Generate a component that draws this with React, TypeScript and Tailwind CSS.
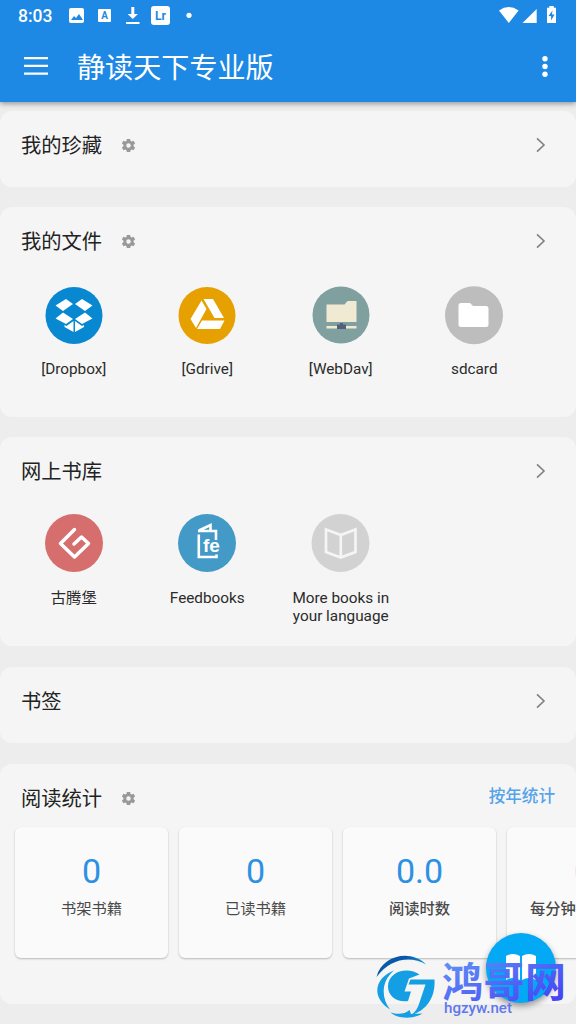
import type { ReactNode } from "react";

const FONT = "font-[Roboto,'Noto_Sans_CJK_SC',sans-serif]";

function Gear() {
  return (
    <svg className="size-[15px] fill-[#999]" viewBox="0 0 24 24">
      <path
        fillRule="evenodd"
        d="M9.300 1.500h5.400l.6 3.100 1.700 1 3.200-1.100 2.400 4.200-2.500 2.200v2.200l2.500 2.200-2.400 4.200-3.200-1.100-1.700 1-.6 3.100H9.300l-.6-3.100-1.700-1-3.200 1.100-2.400-4.200 2.500-2.200v-2.200L1.400 8.700l2.400-4.200L7 5.600l1.700-1zM12 8.400a3.600 3.600 0 1 0 0 7.200 3.600 3.600 0 0 0 0-7.200z"
      />
    </svg>
  );
}

function Chevron() {
  return (
    <svg className="h-4 w-[10px]" viewBox="0 0 10 16" fill="none" stroke="#808080" strokeWidth="1.6">
      <path d="M1 1.300 8 8l-7 6.700" />
    </svg>
  );
}

type SectionProps = {
  title: string;
  gear?: boolean;
  action?: ReactNode;
  className: string;
  children?: ReactNode;
};

function Section({ title, gear, action, className, children }: SectionProps) {
  return (
    <section className={`shrink-0 overflow-hidden rounded-xl bg-[#f5f5f5] ${className}`}>
      <div className="flex h-[70px] items-center pr-[30px] pl-[21px]">
        <h2 className="text-[20.3px] leading-[30px] text-[#222]">{title}</h2>
        {gear && (
          <span className="-mt-px ml-[18.5px]">
            <Gear />
          </span>
        )}
        <span className="-mt-[3px] ml-auto">{action ?? <Chevron />}</span>
      </div>
      {children}
    </section>
  );
}

function Item({ label, children }: { label: ReactNode; children: ReactNode }) {
  return (
    <div className="flex flex-col items-center">
      <svg className="size-[58px] overflow-visible" viewBox="0 0 58 58">
        {children}
      </svg>
      <span className="mt-[17px] text-center text-[15.3px] leading-[18px] whitespace-nowrap text-[#2b2b2b]">
        {label}
      </span>
    </div>
  );
}

function StatusBar() {
  return (
    <div className="flex h-8 items-center px-[18px]">
      <span className="w-[50px] text-[17.5px] font-medium">8:03</span>
      <svg className="h-6 w-[130px]" viewBox="68 4 130 24" fill="white">
        <rect x="69" y="8" width="15" height="15" rx="2" />
        <path d="m71 20 3-4 2 2 3-4 4 6z" fill="#1e88e5" />
        <rect x="98" y="9" width="13" height="13" rx="1" />
        <text x="104.5" y="19" textAnchor="middle" fontSize="10" fontWeight="700" fill="#1e88e5">
          A
        </text>
        <path d="M131.300 7h3v7h3.700l-5.200 5-5.200-5h3.700zM126 22h13.500v2H126z" />
        <rect x="151" y="6" width="19" height="19" rx="3" />
        <text x="160.500" y="19.500" textAnchor="middle" fontSize="12" fontWeight="700" fill="#1e88e5">
          Lr
        </text>
        <circle cx="189" cy="15.300" r="2.600" />
      </svg>
      <svg className="ml-auto h-6 w-[60px]" viewBox="499 4 60 24" fill="white">
        <path d="M500 10.500q9.800-6.800 19.600 0L509.800 23z" />
        <path d="M537.700 9v14H523.500z" />
        <path d="M550.300 6h4.500v1.800h2.200V23h-9V7.800h2.300z" />
        <path d="M553.500 10.500 549.500 16h2.600v4.500l3.500-6H553z" fill="#1e88e5" />
      </svg>
    </div>
  );
}

function Stat({ value, label, bold }: { value: string; label: string; bold?: boolean }) {
  return (
    <div className="flex h-[131px] w-[153px] shrink-0 flex-col items-center rounded-md bg-[#fafafa] pt-6 shadow-[0_1px_2px_rgba(0,0,0,0.25)]">
      <span className="text-[34px] leading-10 text-[#2d91e3]">{value}</span>
      <span
        className={`mt-[7px] text-[15.3px] leading-[22px] whitespace-nowrap text-[#4a4a4a] ${bold ? "font-medium" : ""}`}
      >
        {label}
      </span>
    </div>
  );
}

function Watermark() {
  return (
    <svg className="absolute top-[950px] left-[370px] h-[74px] w-[206px]" viewBox="370 950 206 74">
      <defs>
        <linearGradient id="word" x1="0" y1="0" x2="1" y2="1">
          <stop offset="0" stopColor="#639df6" />
          <stop offset="1" stopColor="#4238f5" />
        </linearGradient>
        <linearGradient id="ring" x1="0" y1="0" x2="1" y2="0">
          <stop offset="0" stopColor="#0a58a8" />
          <stop offset="0.6" stopColor="#0a58a8" />
          <stop offset="1" stopColor="#1595dc" />
        </linearGradient>
      </defs>
      <path d="M376.500 977C382 955 411 949 426 964.500 410 955 390 959 376.500 977z" fill="url(#ring)" />
      <g fill="#149ee3">
        <path d="M394 970.500C378 976 368 995 390 1009.500 381 998 381 981 394 970.500z" />
        <path d="M419.500 974.500C408 966 388 971 388 986.500c0 10 9 16 20 14.500l3-9.500h-6.500l4.500-13z" />
        <path d="M410.500 979.500h24c1 17-7 31-24.500 36 5-3 7-6 9-11.500l6.500-19.500h-17z" />
        <path d="M390.500 1012.500c8 2.500 14 1.500 19-2.500l1.500 4 11.500-.5c-8 5.500-24 6-32-1z" />
      </g>
      <text
        x="442"
        y="997"
        fontSize="41"
        fontWeight="700"
        fontFamily="Noto Sans CJK SC"
        textLength="124"
        fill="url(#word)"
      >
        鸿哥网
      </text>
      <text
        x="444"
        y="1012.5"
        fontSize="14"
        fontWeight="500"
        fontFamily="Roboto"
        textLength="68"
        lengthAdjust="spacingAndGlyphs"
        fill="#6077ee"
      >
        hgzyw.net
      </text>
    </svg>
  );
}

export default function App() {
  return (
    <div className={`relative flex h-[1024px] w-[576px] flex-col overflow-hidden bg-[#ededed] ${FONT}`}>
      <header className="z-10 h-[102px] shrink-0 bg-[#1e88e5] text-white shadow-[0_2px_5px_rgba(0,0,0,0.35)]">
        <StatusBar />
        <div className="flex h-[68px] items-center pr-[27px] pl-6">
          <svg className="h-[18px] w-6 fill-white" viewBox="0 0 24 18">
            <path d="M0 0h24v2.200H0zM0 7.800h24V10H0zM0 15.600h24v2.200H0z" />
          </svg>
          <h1 className="mt-[5px] ml-[29px] text-[28.1px] leading-10">静读天下专业版</h1>
          <svg className="ml-auto h-6 w-2 fill-white" viewBox="0 0 8 24">
            <circle cx="4" cy="4.700" r="2.700" />
            <circle cx="4" cy="12.500" r="2.700" />
            <circle cx="4" cy="20.200" r="2.700" />
          </svg>
        </div>
      </header>

      <main className="flex flex-col pt-[9px]">
        <Section title="我的珍藏" gear className="h-[76px]" />

        <Section title="我的文件" gear className="mt-5 h-[210px]">
          <div className="mt-2 grid grid-cols-4 pr-[35px] pl-[7px]">
            <Item label="[Dropbox]">
              <circle cx="29" cy="30.500" r="28.500" fill="#0788d1" />
              <path
                fill="white"
                d="m21 14 7 5-10 7-7.500-5.500zm16 0-7 5 10 7 7.500-5.500zM18 27.500l10 6.500-7 5-10.500-5.500zm22 0L30 34l7 5 10.500-5.500zM28.500 36v11L19.500 42v-2l2 1zm1.500 0v11l9-5v-2l-2 1z"
              />
            </Item>
            <Item label="[Gdrive]">
              <circle cx="29" cy="30.500" r="28.500" fill="#e6a100" />
              <path
                fill="white"
                d="m23.500 15.500 5 8.500-10.500 19L12.500 34zM25.500 14h9.500L46 33h-9.500zM24 35.500h22.500L42 44H19z"
              />
            </Item>
            <Item label="[WebDav]">
              <circle cx="29" cy="30" r="28.500" fill="#80a09f" />
              <path d="M14.500 19.500h18l3-3.500h9v21h-30z" fill="#f0ead2" />
              <path d="M14.500 41h30v2.500h-30z" fill="#f0ead2" />
              <path d="M25 39.500h3V38h3v1.500h3V44h-9z" fill="#53607a" />
            </Item>
            <Item label="sdcard">
              <circle cx="29" cy="30.300" r="29" fill="#bdbdbd" />
              <path
                d="M16 18h9l3 3h13a2.500 2.500 0 0 1 2.500 2.500v16A2.500 2.500 0 0 1 41 42H16a2.500 2.500 0 0 1-2.500-2.500v-19A2.500 2.500 0 0 1 16 18z"
                fill="white"
              />
            </Item>
          </div>
        </Section>

        <Section title="网上书库" className="mt-5 h-[209px]">
          <div className="mt-[7px] grid grid-cols-4 pr-[35px] pl-[7px]">
            <Item label="古腾堡">
              <circle cx="29" cy="29" r="29" fill="#d66e6e" />
              <path
                d="M29.500 15.500 15.500 29.500l14 13.500 14-13.500-7-6.500-7.500 7"
                fill="none"
                stroke="white"
                strokeWidth="3.500"
                strokeLinecap="round"
                strokeLinejoin="round"
              />
            </Item>
            <Item label="Feedbooks">
              <circle cx="29" cy="29" r="29" fill="#439ac6" />
              <path
                d="M20.800 20.500v22.500H38.500v-2.500M20 17h18v9M21 16.500l11.500-5.500v5.500"
                fill="none"
                stroke="white"
                strokeWidth="2.600"
              />
              <text x="25" y="38" fontSize="19" fontWeight="700" fontFamily="Liberation Sans" fill="white">
                fe
              </text>
            </Item>
            <Item
              label={
                <>
                  More books in
                  <br />
                  your language
                </>
              }
            >
              <circle cx="28.500" cy="29" r="29" fill="#d2d2d2" />
              <path
                d="M14 15.500 28.800 21 43.500 15.500V38L28.800 43.500 14 38zM28.800 21v22"
                fill="none"
                stroke="#f5f5f5"
                strokeWidth="2.700"
              />
            </Item>
          </div>
        </Section>

        <Section title="书签" className="mt-[21px] h-[76px]" />

        <Section
          title="阅读统计"
          gear
          className="mt-[21px] h-[240px]"
          action={
            <span className="-mr-[9px] text-[16.6px] font-medium whitespace-nowrap text-[#55a3e8]">
              按年统计
            </span>
          }
        >
          <div className="-mt-[7px] flex gap-[11px] pl-[15px]">
            <Stat value="0" label="书架书籍" />
            <Stat value="0" label="已读书籍" />
            <Stat value="0.0" label="阅读时数" bold />
            <Stat value="0" label="每分钟阅读字数" bold />
          </div>
        </Section>
      </main>

      <button className="absolute top-[933px] left-[486px] flex size-[70px] items-center justify-center rounded-full bg-[#03a9f4] shadow-[0_3px_6px_rgba(0,0,0,0.4)]">
        <svg className="h-[30px] w-8 fill-white" viewBox="0 0 32 30">
          <path d="M1 3q7-4 14 0v24q-7-4-14 0zM17 3q7-4 14 0v24q-7-4-14 0z" />
        </svg>
      </button>
      <Watermark />
    </div>
  );
}
